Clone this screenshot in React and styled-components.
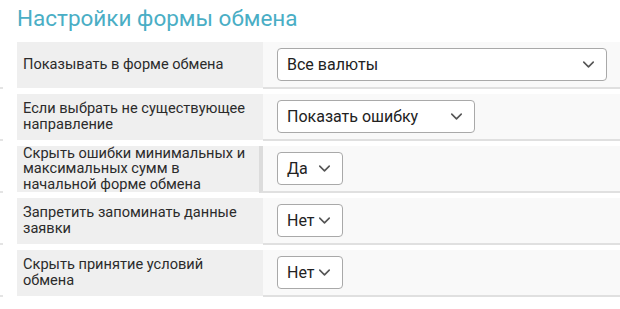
import React from 'react'
import styled, {createGlobalStyle} from 'styled-components'
import {ChevronDown} from 'lucide-react'

const GlobalStyle = createGlobalStyle`
    body {
        margin: 0;
        background: #fff;
        font-family: Roboto, "Liberation Sans", sans-serif;
    }
`

const Page = styled.div`
    width: 620px;
    padding-top: 3px;
`

const Title = styled.h2`
    margin: 0 0 9px 17px;
    font-size: 22.5px;
    font-weight: 400;
    line-height: 30px;
    color: #4aaec5;
`

const Row = styled.div`
    display: flex;
    margin-bottom: 5px;
`

const Gutter = styled.div`
    width: 17px;
    position: relative;
    &:after {
        content: '';
        position: absolute;
        left: 0;
        bottom: 0;
        width: 3px;
        height: 2px;
        background: #e4e4e4;
    }
`

const Label = styled.div`
    width: ${p => p.$narrow ? 242 : 246}px;
    box-sizing: border-box;
    background: #efefef;
    padding: 0 6px;
    height: 46px;
    display: flex;
    align-items: center;
    font-size: 14.6px;
    line-height: 15.6px;
    color: #2b2b2b;
`

const Value = styled.div`
    flex: 1;
    height: 45px;
    background: #f9f9f9;
    border-bottom: 2px solid #e0e0e0;
    border-left: ${p => p.$edge ? '4px solid #dcdcdc' : 'none'};
    padding-left: 14px;
    display: flex;
    align-items: center;
`

const Select = styled.div`
    width: ${p => p.$width}px;
    height: 33px;
    box-sizing: border-box;
    background: #fff;
    border: 1px solid #a9a9a9;
    border-radius: 4px;
    padding: 0 8px 0 9px;
    display: flex;
    align-items: center;
    justify-content: space-between;
    font-size: 16px;
    color: #222;
`

const rows = [
    {label: 'Показывать в форме обмена', value: 'Все валюты', width: 330},
    {label: 'Если выбрать не существующее направление', value: 'Показать ошибку', width: 198},
    {label: 'Скрыть ошибки минимальных и максимальных сумм в начальной форме обмена', value: 'Да', width: 66, edge: true},
    {label: 'Запретить запоминать данные заявки', value: 'Нет', width: 66},
    {label: 'Скрыть принятие условий обмена', value: 'Нет', width: 66},
]

export default function App() {
    return <Page>
        <GlobalStyle/>
        <Title>Настройки формы обмена</Title>
        {rows.map((r, i) => (
            <Row key={i}>
                <Gutter/>
                <Label $narrow={r.edge}>{r.label}</Label>
                <Value $edge={r.edge}>
                    <Select $width={r.width}>
                        <span>{r.value}</span>
                        <ChevronDown size={19} strokeWidth={2} color="#555"/>
                    </Select>
                </Value>
            </Row>
        ))}
    </Page>
}
